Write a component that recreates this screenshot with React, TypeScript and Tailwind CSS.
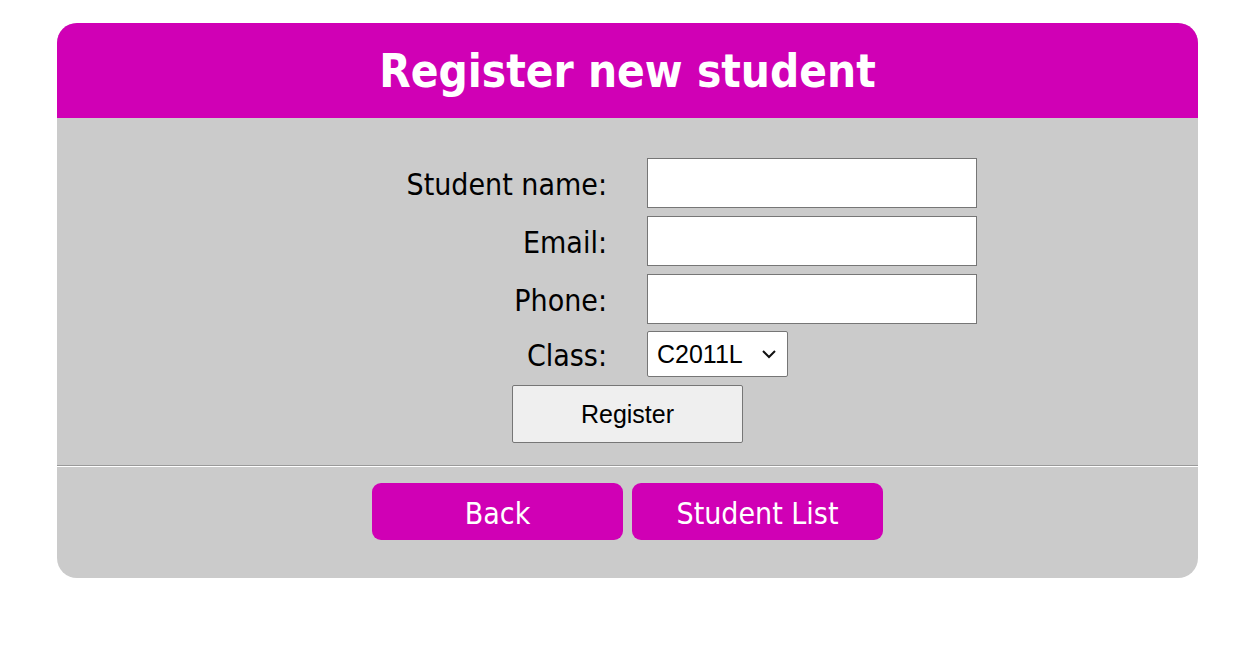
import React from 'react';

const tahoma = "font-['DejaVu_Sans_Condensed','DejaVu_Sans',sans-serif]";

export default function App() {
    return (
        <div className="w-full min-h-screen bg-white pt-[23px] px-[57px]">
            <div className="w-[1141px] rounded-[20px] overflow-hidden bg-[#cbcbcb]">
                {/* Header */}
                <div className="h-[95px] bg-[#d000b5] flex items-center justify-center">
                    <h1 className={`${tahoma} text-white font-bold text-[45.5px] leading-none pt-[2px]`}>Register new student</h1>
                </div>

                {/* Form */}
                <div className="pt-[40px] pb-[22px]">
                    <div className={`grid grid-cols-[550px_330px] gap-x-10 gap-y-2 items-center ${tahoma} text-[30px] leading-[40px] text-black`}>
                        <label className="text-right pt-[4px]">Student name:</label>
                        <input type="text" className="h-[50px] bg-white border border-[#767676] outline-none" />
                        <label className="text-right pt-[4px]">Email:</label>
                        <input type="text" className="h-[50px] bg-white border border-[#767676] outline-none" />
                        <label className="text-right pt-[4px]">Phone:</label>
                        <input type="text" className="h-[50px] bg-white border border-[#767676] outline-none" />
                        <label className="text-right -mt-px pt-[4px]">Class:</label>
                        <div className="-mt-px">
                            <div className="w-[141px] h-[46px] bg-white border border-[#767676] rounded-[2px] flex items-center justify-between pl-[9px] pr-[10px] font-['Liberation_Sans',Arial,sans-serif] text-[25px]">
                                <span>C2011L</span>
                                <svg width="16" height="10" viewBox="0 0 16 10" fill="none">
                                    <path d="M2 2l6 6 6-6" stroke="#111" strokeWidth="2" />
                                </svg>
                            </div>
                        </div>
                    </div>
                    <div className="flex justify-center mt-2">
                        <button className="w-[231px] h-[58px] pt-[2px] bg-[#efefef] border border-[#767676] rounded-[2px] font-['Liberation_Sans',Arial,sans-serif] text-[25px] text-black">
                            Register
                        </button>
                    </div>
                </div>

                <div className="border-t border-[#9a9a9a] border-b border-b-white" />

                {/* Navigation */}
                <div className="flex justify-center gap-[9px] pt-[16px] pb-[38px]">
                    <button className={`w-[251px] h-[57px] pt-[4px] rounded-[9px] bg-[#d000b5] text-white text-[30px] ${tahoma}`}>Back</button>
                    <button className={`w-[251px] h-[57px] pt-[4px] rounded-[9px] bg-[#d000b5] text-white text-[30px] ${tahoma}`}>Student List</button>
                </div>
            </div>
        </div>
    );
}
